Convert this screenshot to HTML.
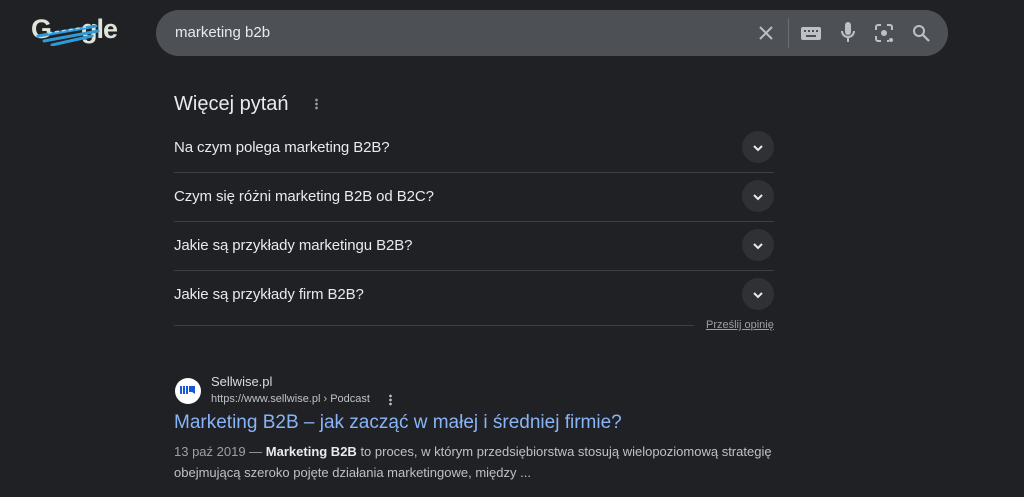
<!DOCTYPE html>
<html><head><meta charset="utf-8"><style>
*{margin:0;padding:0;box-sizing:border-box}
body{width:1024px;height:497px;background:#202124;font-family:"Liberation Sans",Arial,sans-serif;color:#e8eaed;position:relative;overflow:hidden}
.a{position:absolute}
.search{left:156px;top:10px;width:792px;height:46px;border-radius:23px;background:#4d5156}
.q{left:174px;font-size:15px;color:#e8eaed;letter-spacing:-0.1px}
.chev{left:742px;width:32px;height:32px;border-radius:50%;background:#303134}
.sep{left:174px;width:600px;height:1px;background:#3c4043}
</style></head><body>
<div class="a" style="left:31px;top:14px;font-size:27px;font-weight:bold;color:#dfe3d8;letter-spacing:-1px">G</div>
<div class="a" style="left:81px;top:14px;font-size:27px;font-weight:bold;color:#dfe3d8;letter-spacing:-1px">gle</div>
<svg class="a" style="left:34px;top:20px" width="72" height="26"><path d="M4 16 L62 6 M10 21 L64 11 M18 25 L58 16" stroke="#2f9ad8" stroke-width="3" stroke-linecap="round"/><path d="M14 13 L52 7" stroke="#9fe0ff" stroke-width="1.5" stroke-dasharray="4 3"/></svg>
<div class="a search"></div>
<div class="a" style="left:175px;top:24px;font-size:15px;color:#e8eaed">marketing b2b</div>
<svg class="a" style="left:758px;top:25px" width="16" height="16"><path d="M2 2L14 14M14 2L2 14" stroke="#bdc1c6" stroke-width="2"/></svg>
<div class="a" style="left:788px;top:18px;width:1px;height:30px;background:#6a6e73"></div>
<svg class="a" style="left:801px;top:27px" width="20" height="13"><rect x="0" y="0" width="20" height="13" rx="2" fill="#bdc1c6"/><g fill="#4d5156"><rect x="3" y="3" width="2" height="2"/><rect x="7" y="3" width="2" height="2"/><rect x="11" y="3" width="2" height="2"/><rect x="15" y="3" width="2" height="2"/><rect x="5" y="8" width="10" height="2"/></g></svg>
<svg class="a" style="left:840px;top:22px" width="16" height="22"><rect x="5" y="0" width="6" height="13" rx="3" fill="#bdc1c6"/><path d="M2 9a6 6 0 0 0 12 0M8 15v5" stroke="#bdc1c6" stroke-width="2" fill="none"/></svg>
<svg class="a" style="left:874px;top:23px" width="20" height="20"><path d="M2 7V4a2 2 0 0 1 2-2h3M13 2h3a2 2 0 0 1 2 2v3M2 13v3a2 2 0 0 0 2 2h3M13 18h2" stroke="#bdc1c6" stroke-width="2" fill="none"/><circle cx="10" cy="10" r="3" fill="#bdc1c6"/><circle cx="17" cy="17" r="2" fill="#bdc1c6"/></svg>
<svg class="a" style="left:912px;top:24px" width="18" height="18"><circle cx="7" cy="7" r="5" stroke="#bdc1c6" stroke-width="2" fill="none"/><path d="M11 11L17 17" stroke="#bdc1c6" stroke-width="2.2"/></svg>

<div class="a" style="left:174px;top:93px;font-size:20px;color:#e8eaed">Więcej pytań</div>
<div class="a" style="left:315px;top:98px;width:3px;height:12px;background:radial-gradient(circle,#9aa0a6 1.2px,transparent 1.5px) 0 0/3px 4px"></div>

<div class="a q" style="top:139px">Na czym polega marketing B2B?</div>
<div class="a chev" style="top:131px"></div>
<div class="a sep" style="top:172px"></div>
<div class="a q" style="top:188px">Czym się różni marketing B2B od B2C?</div>
<div class="a chev" style="top:180px"></div>
<div class="a sep" style="top:221px"></div>
<div class="a q" style="top:237px">Jakie są przykłady marketingu B2B?</div>
<div class="a chev" style="top:229px"></div>
<div class="a sep" style="top:270px"></div>
<div class="a q" style="top:286px">Jakie są przykłady firm B2B?</div>
<div class="a chev" style="top:278px"></div>
<svg class="a" style="left:751px;top:142px" width="14" height="160"><g stroke="#e8eaed" stroke-width="2" fill="none"><path d="M3 4l4 4 4-4"/><path d="M3 53l4 4 4-4"/><path d="M3 102l4 4 4-4"/><path d="M3 151l4 4 4-4"/></g></svg>
<div class="a" style="left:174px;top:325px;width:520px;height:1px;background:#3c4043"></div>
<div class="a" style="left:706px;top:319px;font-size:11px;color:#9aa0a6;text-decoration:underline">Prześlij opinię</div>

<div class="a" style="left:175px;top:378px;width:26px;height:26px;border-radius:50%;background:#fff"></div>
<svg class="a" style="left:180px;top:385px" width="16" height="11"><g fill="#1a56db"><rect x="0" y="1" width="2" height="8"/><rect x="3" y="1" width="2" height="8"/><rect x="6" y="1" width="2" height="8"/><path d="M9 1h6v8l-3-2h-3z"/></g></svg>
<div class="a" style="left:211px;top:374px;font-size:13px;color:#dadce0">Sellwise.pl</div>
<div class="a" style="left:211px;top:393px;font-size:11px;color:#bdc1c6">https://www.sellwise.pl › Podcast</div>
<div class="a" style="left:389px;top:394px;width:3px;height:12px;background:radial-gradient(circle,#bdc1c6 1.2px,transparent 1.5px) 0 0/3px 4px"></div>
<div class="a" style="left:174px;top:412px;font-size:19px;color:#8ab4f8">Marketing B2B – jak zacząć w małej i średniej firmie?</div>
<div class="a" style="left:174px;top:441px;font-size:13px;color:#bdc1c6;line-height:21px;width:620px"><span style="color:#9aa0a6">13 paź 2019 — </span><b style="color:#e8eaed">Marketing B2B</b> to proces, w którym przedsiębiorstwa stosują wielopoziomową strategię obejmującą szeroko pojęte działania marketingowe, między ...</div>
</body></html>
